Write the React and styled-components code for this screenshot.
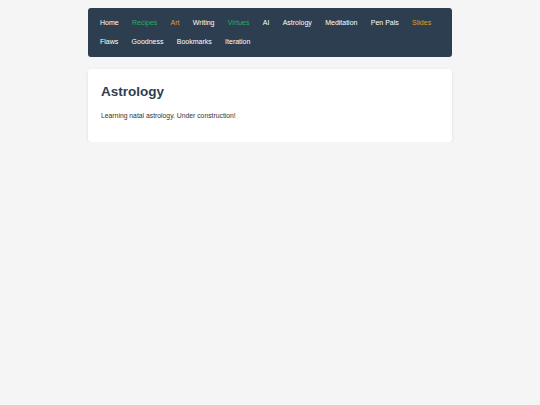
import React from "react";
import styled, { createGlobalStyle } from "styled-components";

const GlobalStyle = createGlobalStyle`
  html, body {
    margin: 0;
    padding: 0;
    background: #f5f5f5;
    font-family: "Liberation Sans", Arial, sans-serif;
  }
`;

const Page = styled.div`
  width: 364px;
  margin: 0 auto;
  padding-top: 8px;
  display: flex;
  flex-direction: column;
  gap: 12px;
`;

const Nav = styled.nav`
  background: #2c3e50;
  border-radius: 3px;
  padding: 5px 12px 6px;
  display: flex;
  flex-wrap: wrap;
  column-gap: 13.3px;
`;

const NavLink = styled.a`
  display: block;
  padding: 5px 0;
  font-size: 7px;
  line-height: 9px;
  text-decoration: none;
  color: ${(props) =>
    props.tone === "green" ? "#27ae60" : props.tone === "orange" ? "#e39b2b" : "#ffffff"};
  cursor: pointer;
`;

const Card = styled.main`
  background: #ffffff;
  border-radius: 3px;
  box-shadow: 0 1px 3px rgba(0, 0, 0, 0.1);
  padding: 14px 13px 22px;
`;

const Title = styled.h1`
  margin: 0 0 11px;
  font-size: 13.5px;
  line-height: 17px;
  font-weight: bold;
  color: #2c3e50;
`;

const Text = styled.p`
  margin: 0;
  font-size: 6.8px;
  line-height: 9px;
  color: #333333;
`;

const links = [
  ["Home"],
  ["Recipes", "green"],
  ["Art", "orange"],
  ["Writing"],
  ["Virtues", "green"],
  ["AI"],
  ["Astrology"],
  ["Meditation"],
  ["Pen Pals"],
  ["Slides", "orange"],
  ["Flaws"],
  ["Goodness"],
  ["Bookmarks"],
  ["Iteration"],
];

export default function App() {
  return (
    <>
      <GlobalStyle />
      <Page>
        <Nav>
          {links.map(([label, tone]) => (
            <NavLink key={label} tone={tone}>
              {label}
            </NavLink>
          ))}
        </Nav>
        <Card>
          <Title>Astrology</Title>
          <Text>Learning natal astrology. Under construction!</Text>
        </Card>
      </Page>
    </>
  );
}
